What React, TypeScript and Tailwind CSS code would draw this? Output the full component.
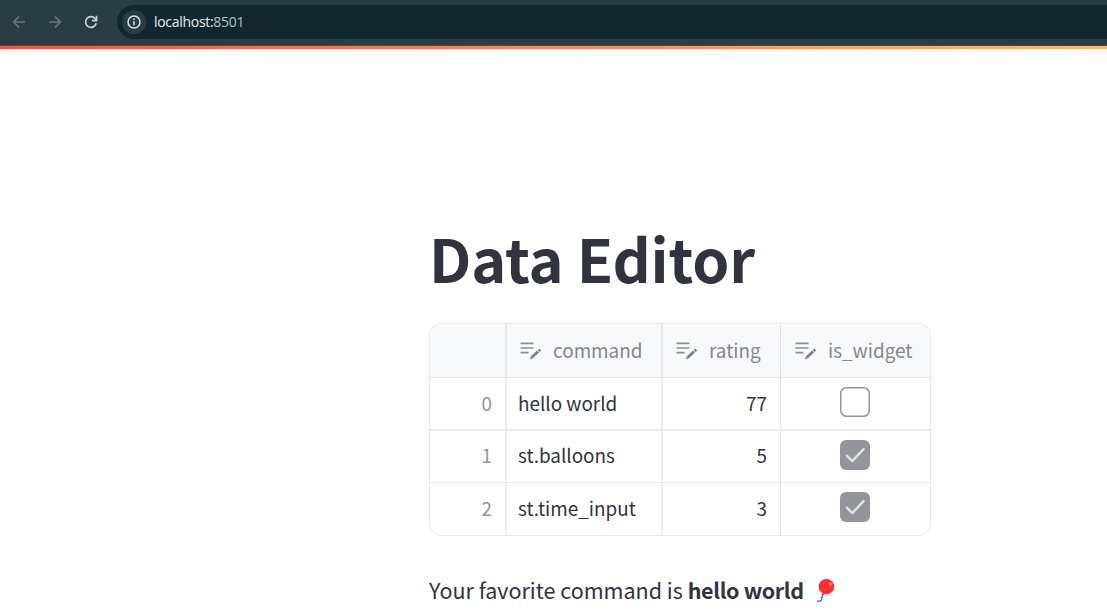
import React from "react";

const rows = [
  { id: 0, command: "hello world", rating: 77, widget: false, size: "h-[53px] border-b-2 border-[#ededef]", text: "pt-[11px]" },
  { id: 1, command: "st.balloons", rating: 5, widget: true, size: "h-[52px] border-b border-[#e6e7e9]", text: "pt-[10px]" },
  { id: 2, command: "st.time_input", rating: 3, widget: true, size: "h-[52px]", text: "pt-[11px]" },
];

function EditNote() {
  return (
    <svg viewBox="0 0 27 27" className="mt-px h-[27px] w-[27px] shrink-0" fill="none">
      <path d="M3.5 6.4h13M3.5 11h13M3.5 15.6h8" stroke="#8d8e96" strokeWidth="1.6" />
      <path d="M14.6 20.6 21.1 14.5" stroke="#7d7e87" strokeWidth="2.8" />
      <path d="M13.2 22.3v-2.6l2.4 2.4z" fill="#7d7e87" />
      <path d="M21.7 13.9 23.2 12.5" stroke="#7d7e87" strokeWidth="2.8" />
    </svg>
  );
}

function HeaderCell({ label, className }: { label: string; className: string }) {
  return (
    <div className={`flex items-start pt-[12px] ${className}`}>
      <EditNote />
      <span className="ml-[9px] text-[18.9px] leading-[28px] text-[#85868e]">{label}</span>
    </div>
  );
}

function Checkbox({ checked }: { checked: boolean }) {
  if (!checked)
    return (
      <svg viewBox="0 0 30 30" className="h-[30px] w-[30px]" fill="none" stroke="#94959b" strokeWidth="1.5">
        <rect x="0.75" y="0.75" width="28.5" height="28.5" rx="5.6" />
      </svg>
    );
  return (
    <div className="h-[30px] w-[30px] rounded-[6px] bg-[#94959b]">
      <svg viewBox="0 0 30 30" className="h-[30px] w-[30px]" fill="none" stroke="#dedfe1" strokeWidth="2.5" strokeLinecap="round" strokeLinejoin="round">
        <path d="M6.8 15.6 12.2 21.1 23.6 9.1" />
      </svg>
    </div>
  );
}

function Balloon() {
  return (
    <svg viewBox="0 0 20 26" className="mt-[2px] ml-[12px] h-[26px] w-[20px]" fill="none">
      <path d="M1.2 23.1H3.8C7 22.8 4.6 20.4 6.5 18V16" stroke="#4256e8" strokeWidth="1.3" />
      <path d="m7.4 14.6-1.9 2.2 3 .3z" fill="#d9203a" />
      <ellipse cx="10.4" cy="8.7" rx="7.8" ry="7.6" fill="#fb302e" />
      <ellipse cx="14.4" cy="6" rx="1.3" ry="1.8" fill="#ff8582" transform="rotate(-30 14.4 6)" />
    </svg>
  );
}

export default function App() {
  return (
    <div className="h-[615px] w-full overflow-hidden bg-white font-['Noto_Sans_CJK_SC',sans-serif] text-[#31333f]">
      <header className="flex h-[46px] items-start border-b border-[#3b4c52] bg-[#293e44]">
        <div className="flex h-[44px] w-[117px] items-center">
          <svg viewBox="0 0 16 16" className="ml-[11px] h-4 w-4" fill="none" stroke="#68787d" strokeWidth="1.6">
            <path d="M14 8H2.8M8 2.6 2.6 8 8 13.4" />
          </svg>
          <svg viewBox="0 0 16 16" className="ml-5 h-4 w-4" fill="none" stroke="#68787d" strokeWidth="1.6">
            <path d="M2 8h11.2M8 2.6 13.4 8 8 13.4" />
          </svg>
          <svg viewBox="0 0 16 16" className="ml-5 h-4 w-4" fill="none" stroke="#c3d0d4" strokeWidth="1.7">
            <path d="M13.2 9.3A5.4 5.4 0 1 1 12.2 4.6L13.5 6.3M13.6 1.8v4.9H8.9" />
          </svg>
        </div>
        <div className="mt-[5px] flex h-[34px] flex-1 items-center rounded-l-full bg-[#12282e] pl-[5px]">
          <div className="flex h-6 w-6 items-center justify-center rounded-full bg-[#293e44]">
            <svg viewBox="0 0 14 14" className="h-[14px] w-[14px]" fill="none" stroke="#dce5e8" strokeWidth="1.5">
              <circle cx="7" cy="7" r="6" />
              <path d="M7 6.2v4M7 3.6v1.5" />
            </svg>
          </div>
          <span className="ml-[8px] font-['Open_Sans'] text-[14px] leading-[18px] tracking-[-0.3px] text-[#e6ebed]">
            localhost:<span className="text-[#afc1c7]">8501</span>
          </span>
        </div>
      </header>
      <div className="h-[3px] bg-gradient-to-r from-[#ff4b4b] to-[#ffb469]" />
      <main className="ml-[429px] w-[502px] pt-[168px]">
        <h1 className="h-[80px] whitespace-nowrap text-[59.4px] leading-[80px] font-bold tracking-[-0.15px]">Data Editor</h1>
        <div className="mt-[26px] h-[213px] overflow-hidden rounded-[12px] border border-[#e6e7ea]">
          <div className="grid h-[54px] grid-cols-[77px_156px_118px_1fr] border-b border-[#e3e4e8] bg-[#f8f9fb]">
            <div className="border-r-2 border-[#e8e9ec]" />
            <HeaderCell label="command" className="border-r-2 border-[#e8e9ec] pl-[10px]" />
            <HeaderCell label="rating" className="border-r border-[#e3e4e8] pl-[10px]" />
            <HeaderCell label="is_widget" className="pl-[11px]" />
          </div>
          {rows.map((r) => (
            <div key={r.id} className={`grid grid-cols-[77px_156px_118px_1fr] text-[18.9px] leading-[28px] ${r.size}`}>
              <div className={`flex justify-end border-r-2 border-[#ededef] pr-[13px] text-[#94959b] ${r.text}`}>{r.id}</div>
              <div className={`border-r-2 border-[#ededef] pl-[11px] ${r.text}`}>{r.command}</div>
              <div className={`flex justify-end border-r border-[#e6e7e9] pr-[13px] ${r.text}`}>{r.rating}</div>
              <div className="flex justify-center pt-[9px] pr-[2px]">
                <Checkbox checked={r.widget} />
              </div>
            </div>
          ))}
        </div>
        <p className="mt-[36px] flex h-[36px] items-center text-[21.5px] leading-[36px] whitespace-pre">
          <span>Your favorite command is </span>
          <strong className="font-bold tracking-[-0.35px]">hello world</strong>
          <Balloon />
        </p>
      </main>
    </div>
  );
}
